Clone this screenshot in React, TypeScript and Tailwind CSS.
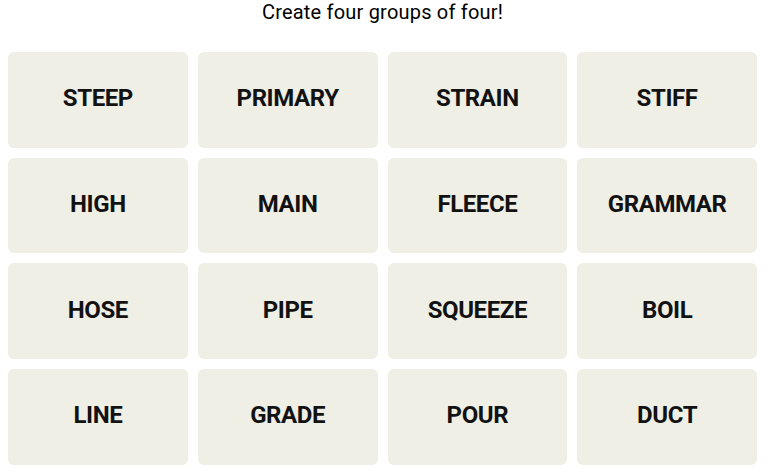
const words = [
  "STEEP", "PRIMARY", "STRAIN", "STIFF",
  "HIGH", "MAIN", "FLEECE", "GRAMMAR",
  "HOSE", "PIPE", "SQUEEZE", "BOIL",
  "LINE", "GRADE", "POUR", "DUCT",
];

export default function App() {
  return (
    <div className="w-[768px] h-[474px] bg-white overflow-hidden">
      <div className="w-[765px] px-2">
        <p className="text-center text-[20px] leading-[24px] text-black font-normal tracking-[0.2px] font-['Roboto',sans-serif]">
          Create four groups of four!
        </p>
        <div className="mt-[28px] grid grid-cols-4 gap-[10px] auto-rows-[95.7px]">
          {words.map((w) => (
            <button
              key={w}
              className="rounded-[6px] bg-[#efefe6] flex items-center justify-center pb-[3px] text-[24px] leading-[28px] font-bold tracking-[-0.4px] text-[#121212] font-['Roboto',sans-serif]"
            >
              {w}
            </button>
          ))}
        </div>
      </div>
    </div>
  );
}
